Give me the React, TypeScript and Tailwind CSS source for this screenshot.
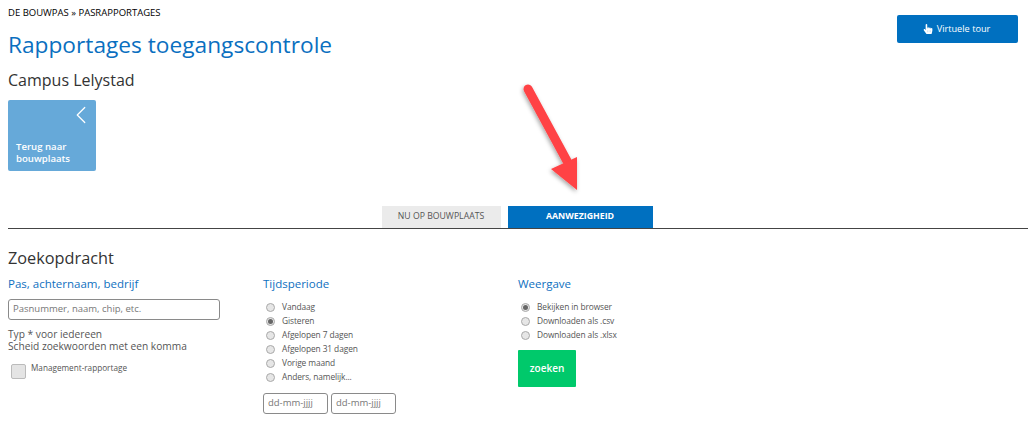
import { FaHandPointer } from "react-icons/fa"
import { ChevronLeft } from "lucide-react"

const font = "font-['Open_Sans','Noto_Sans',sans-serif]"

function Radio({ label, checked }: { label: string; checked?: boolean }) {
  return (
    <div className="flex h-[14px] items-center">
      <span className="ml-[3px] flex h-[9px] w-[9px] items-center justify-center rounded-full border border-[#a9a9a9] bg-[#e6e6e6]">
        {checked && <span className="h-[5px] w-[5px] rounded-full bg-[#666]" />}
      </span>
      <span className="ml-[7px] text-[8.4px] tracking-[-0.1px] text-[#555]">{label}</span>
    </div>
  )
}

function Heading({ children }: { children: string }) {
  return <h3 className="text-[11.5px] leading-[16px] text-[#0f70c0]">{children}</h3>
}

function DateInput() {
  return (
    <div className="flex h-[21px] w-[65px] items-center rounded-[3px] border border-[#8a8a8a] pl-[4px] text-[9.5px] text-[#777]">
      dd-mm-jjjj
    </div>
  )
}

export default function App() {
  return (
    <div className={`${font} relative h-[422px] w-[1035px] overflow-hidden bg-white pl-[8px]`}>
      {/* Header */}
      <div className="flex items-start justify-between pr-[17px]">
        <div>
          <div className="pt-[7px] text-[9.5px] leading-[11px] text-black">DE BOUWPAS » PASRAPPORTAGES</div>
          <h1 className="mt-[11px] text-[22.7px] leading-[32px] text-[#0a6fc0]">Rapportages toegangscontrole</h1>
          <h2 className="mt-[9px] text-[16px] leading-[20px] text-[#333]">Campus Lelystad</h2>
        </div>
        <button className="mt-[15px] flex h-[28px] w-[121px] items-center justify-center gap-[4px] rounded-[2px] bg-[#0070c0] pr-[2px] text-[9.2px] text-white">
          <FaHandPointer size={10} />
          Virtuele tour
        </button>
      </div>

      {/* Terug tile */}
      <div className="mt-[10px] flex h-[71px] w-[88px] flex-col rounded-[2px] bg-[#66a9d9] text-white">
        <div className="flex h-[30px] justify-end">
          <ChevronLeft size={30} strokeWidth={1} />
        </div>
        <div className="mt-[11px] pl-[8px] text-[9.6px] font-semibold leading-[12px]">
          Terug naar
          <br />
          bouwplaats
        </div>
      </div>

      {/* Tabs */}
      <div className="mr-[7px] mt-[35px] flex justify-center gap-[7px] border-b border-[#444] pr-[2px]">
        <div className="flex h-[22px] w-[119px] items-center justify-center bg-[#ebebeb] text-[8.7px] text-[#555]">NU OP BOUWPLAATS</div>
        <div className="flex h-[22px] w-[145px] items-center justify-center bg-[#0070c0] text-[8.8px] font-bold text-white">AANWEZIGHEID</div>
      </div>

      {/* Zoekopdracht */}
      <h2 className="mt-[18px] text-[16.3px] leading-[22px] text-[#333]">Zoekopdracht</h2>
      <div className="mt-[7px] grid grid-cols-[255px_255px_1fr]">
        <div>
          <Heading>Pas, achternaam, bedrijf</Heading>
          <div className="mt-[7px] flex h-[21px] w-[212px] items-center rounded-[3px] border border-[#8a8a8a] pl-[4px] text-[9.5px] text-[#777]">
            Pasnummer, naam, chip, etc.
          </div>
          <p className="mt-[8px] text-[10.2px] leading-[12px] text-[#555]">
            Typ * voor iedereen
            <br />
            Scheid zoekwoorden met een komma
          </p>
          <div className="ml-[3px] mt-[10px] flex items-start gap-[5px]">
            <span className="mt-[2px] h-[15px] w-[15px] rounded-[2px] border border-[#bbb] bg-[#e4e4e4]" />
            <span className="text-[8.2px] leading-[12px] text-[#555]">Management-rapportage</span>
          </div>
        </div>
        <div>
          <Heading>Tijdsperiode</Heading>
          <div className="mt-[8px]">
            <Radio label="Vandaag" />
            <Radio label="Gisteren" checked />
            <Radio label="Afgelopen 7 dagen" />
            <Radio label="Afgelopen 31 dagen" />
            <Radio label="Vorige maand" />
            <Radio label="Anders, namelijk..." />
          </div>
          <div className="mt-[9px] flex gap-[3px]">
            <DateInput />
            <DateInput />
          </div>
        </div>
        <div>
          <Heading>Weergave</Heading>
          <div className="mt-[8px]">
            <Radio label="Bekijken in browser" checked />
            <Radio label="Downloaden als .csv" />
            <Radio label="Downloaden als .xlsx" />
          </div>
          <button className="mt-[8px] h-[37px] w-[58px] rounded-[1px] bg-[#00c96b] text-[10px] font-semibold text-white">zoeken</button>
        </div>
      </div>

      {/* Annotation arrow drawn over the screenshot */}
      <svg className="absolute left-[515px] top-[78px]" width="80" height="122" viewBox="0 0 80 122">
        <defs>
          <filter id="arrowShadow" x="-30%" y="-30%" width="160%" height="160%">
            <feDropShadow dx="-1" dy="2" stdDeviation="2" floodColor="#000" floodOpacity="0.35" />
          </filter>
        </defs>
        <g filter="url(#arrowShadow)">
          <path d="M13 11 L52 83" stroke="#ff4245" strokeWidth="9" strokeLinecap="round" fill="none" />
          <path d="M62 79 L62 112 L36 91 Z" fill="#ff4245" />
        </g>
      </svg>
    </div>
  )
}
